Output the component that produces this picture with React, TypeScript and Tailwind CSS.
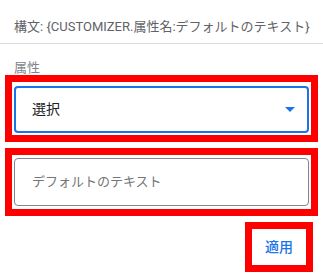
import React from "react";

export default function App() {
  const font = { fontFamily: '"Roboto", "Noto Sans CJK JP", sans-serif' };
  return (
    <div className="w-[323px] h-[276px] bg-white" style={font}>
      <div className="h-[44px] border-b border-[#dadce0] pl-[14px] pt-[19px] text-[13px] leading-[16px] text-[#5f6368] whitespace-nowrap">
        構文: {"{"}CUSTOMIZER.属性名:デフォルトのテキスト{"}"}
      </div>
      <div className="mt-[16px] h-[15px] pl-[14px] text-[13px] leading-[15px] text-[#80868b]">
        属性
      </div>
      <div className="ml-[5px] w-[313px] h-[67px] border-[7px] border-[#ff0000] pt-[4px] px-[2px]">
        <div className="h-[47px] rounded-[4px] border-2 border-[#1a73e8] flex items-center justify-between pl-[16px] pr-[12px]">
          <span className="text-[14px] text-[#202124]">選択</span>
          <svg width="10" height="5" viewBox="0 0 10 5">
            <path d="M0 0 L10 0 L5 5 Z" fill="#1a73e8" />
          </svg>
        </div>
      </div>
      <div className="mt-[6px] ml-[5px] w-[313px] h-[68px] border-[7px] border-[#ff0000] pt-[3px] px-[2px]">
        <div className="h-[48px] rounded-[4px] border border-[#80868b] flex items-center pl-[17px]">
          <span className="text-[13px] text-[#757575]">デフォルトのテキスト</span>
        </div>
      </div>
      <div className="mt-[6px] flex justify-end pr-[10px]">
        <div className="w-[68px] h-[50px] border-[7px] border-[#ff0000] flex items-center justify-center">
          <span className="text-[14px] font-medium text-[#1a73e8]">適用</span>
        </div>
      </div>
    </div>
  );
}
